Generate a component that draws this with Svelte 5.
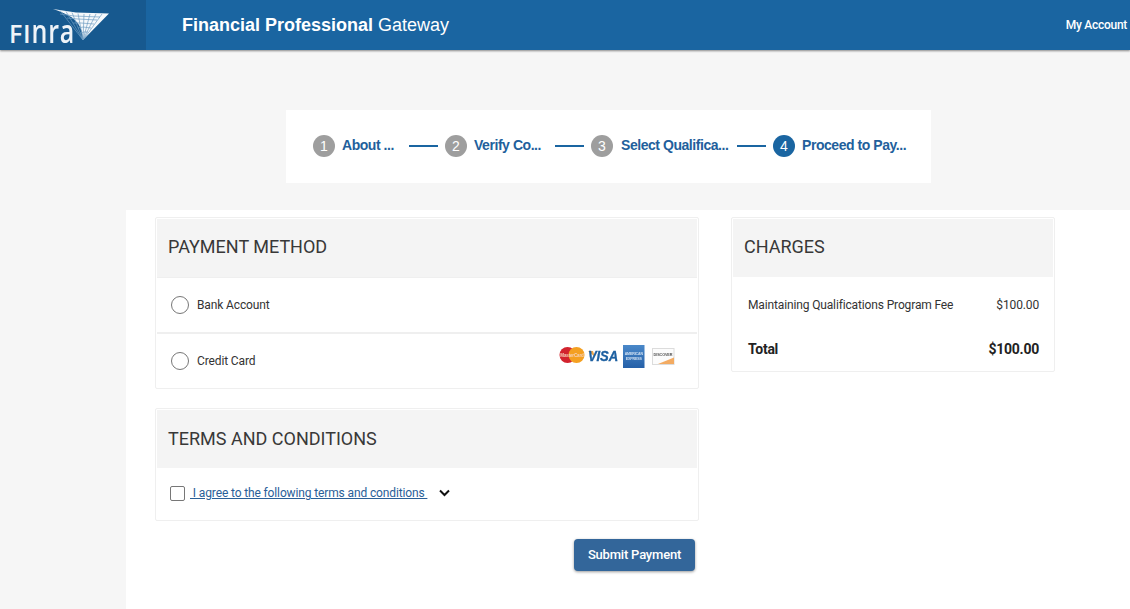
<script>
  const steps = [
    { n: 1, label: 'About ...', w: 60, pad: 7 },
    { n: 2, label: 'Verify Co...', w: 74, pad: 7 },
    { n: 3, label: 'Select Qualifica...', w: 109, pad: 8 },
    { n: 4, label: 'Proceed to Pay...', w: 110, pad: 7, active: true }
  ];
  const fan = [
    [60, 10.5], [66, 11.5], [72, 12.5], [78, 13.5], [84, 14], [90, 14], [96, 14], [102, 14]
  ];
  const arcs = [
    'M60 14 L74 16 L100 17',
    'M67 18 L78 19 L97 20',
    'M73 23 L81 23 L94 24',
    'M78 28 L83 27 L91 28',
    'M80 33 L84 32 L88 32'
  ];
</script>

<header class="topbar">
  <div class="logo">
    <span class="wordmark">FI<span class="low">nra</span></span>
    <svg class="mark" width="146" height="50" viewBox="0 0 146 50">
      <path d="M53 9 L76 12.500 L109 13.500 L83 40 C82.500 30 80 24 72 17.500 C66 14 60 11 53 9 Z" fill="#f5f8fb" />
      {#each fan as [x, y]}
        <path class="net" d="M83 40 L{x} {y}" />
      {/each}
      {#each arcs as d}
        <path class="net" {d} />
      {/each}
    </svg>
  </div>
  <div class="brand"><b>Financial Professional</b> Gateway</div>
  <div class="account">My Account</div>
</header>

<section class="stepper-wrap">
  <div class="stepper">
    {#each steps as s}
      <div class="step" class:active={s.active}>
        <span class="num">{s.n}</span>
        <span class="label" style="width:{s.w}px; margin-left:{s.pad}px">{s.label}</span>
      </div>
      {#if !s.active}<span class="line"></span>{/if}
    {/each}
  </div>
</section>

<main class="content">
  <div class="left">
    <section class="card">
      <h2>PAYMENT METHOD</h2>
      <div class="option first">
        <span class="radio"></span><span>Bank Account</span>
      </div>
      <div class="option">
        <span class="radio"></span><span>Credit Card</span>
        <svg class="cards" width="125" height="30" viewBox="0 0 125 30">
          <defs>
            <linearGradient id="amexfill" x1="0" y1="0" x2="0" y2="1">
              <stop offset="0" stop-color="#4a88c9" />
              <stop offset="1" stop-color="#2560a8" />
            </linearGradient>
          </defs>
          <circle cx="12.500" cy="13" r="8" fill="#d2232e" />
          <circle cx="21.500" cy="13" r="8" fill="#f4a021" />
          <text x="17" y="14.500" class="mc">MasterCard</text>
          <path d="M33 9 L38 9 L40 15 Z" fill="#f0a64a" />
          <text x="33" y="19" class="visa" textLength="30" lengthAdjust="spacingAndGlyphs">VISA</text>
          <rect x="68" y="3" width="21.500" height="23" fill="url(#amexfill)" />
          <text x="78.800" y="13" class="amex">AMERICAN</text>
          <text x="78.800" y="17.500" class="amex">EXPRESS</text>
          <rect x="97.500" y="6.500" width="21.500" height="16" fill="#fcfcfc" stroke="#dcdcdc" />
          <path d="M103 22 L119 15.500 V22 Z" fill="#f3ab62" />
          <text x="108" y="14" class="disc">DISCOVER</text>
        </svg>
      </div>
    </section>

    <section class="card terms">
      <h2>TERMS AND CONDITIONS</h2>
      <div class="agree">
        <span class="check"></span>
        <a href="#terms">&nbsp;I agree to the following terms and conditions&nbsp;</a>
        <svg class="chev" width="12" height="8" viewBox="0 0 12 8">
          <path d="M1 1.500 L5.500 6 L10 1.500" fill="none" stroke="#111" stroke-width="2" />
        </svg>
      </div>
    </section>

    <div class="actions"><button type="button">Submit Payment</button></div>
  </div>

  <aside class="right">
    <section class="card">
      <h2>CHARGES</h2>
      <div class="row"><span>Maintaining Qualifications Program Fee</span><span>$100.00</span></div>
      <div class="row total"><span>Total</span><span>$100.00</span></div>
    </section>
  </aside>
</main>

<style>
  :global(body) {
    margin: 0;
    background: #f6f6f6;
    font-family: Roboto, "Liberation Sans", sans-serif;
    color: #222;
  }
  .topbar {
    height: 50px;
    background: #1a65a1;
    display: flex;
    align-items: center;
    color: #fff;
    box-shadow: 0 1px 2px rgba(0, 0, 0, 0.45);
    position: relative;
  }
  .logo {
    width: 146px;
    height: 50px;
    background: #17598f;
    position: relative;
    flex: none;
  }
  .wordmark {
    position: absolute;
    left: 9px;
    top: 21px;
    font: 600 25px/24px "Open Sans", sans-serif;
    letter-spacing: 0.8px;
    color: #eef3f8;
    white-space: nowrap;
  }
  .low {
    display: inline-block;
    transform: scaleY(1.28);
    transform-origin: 0 21.500px;
  }
  .mark {
    position: absolute;
    left: 0;
    top: 0;
    filter: blur(0.3px);
  }
  .net {
    fill: none;
    stroke: #6f9cc2;
    stroke-width: 0.7;
  }
  .brand {
    margin-left: 36px;
    font: 400 18px/24px "Liberation Sans", sans-serif;
  }
  .brand b { font-weight: 700; }
  .account {
    margin-left: auto;
    margin-right: 3px;
    font: 500 12px/16px Roboto, sans-serif;
    letter-spacing: -0.28px;
  }
  .stepper-wrap {
    padding: 60px 199px 27px 286px;
  }
  .stepper {
    height: 73px;
    background: #fff;
    display: flex;
    align-items: center;
    padding: 0 0 2px 27px;
    box-sizing: border-box;
  }
  .step { display: flex; align-items: center; }
  .num {
    width: 22px;
    height: 22px;
    border-radius: 50%;
    background: #9e9e9e;
    color: #fff;
    font: 400 14px/22px "Liberation Sans", sans-serif;
    text-align: center;
    flex: none;
  }
  .active .num { background: #1a65a1; }
  .label {
    font: 700 14px/18px "Liberation Sans", sans-serif;
    letter-spacing: -0.45px;
    color: #225f9c;
    white-space: nowrap;
    padding-bottom: 2px;
  }
  .line {
    width: 29px;
    height: 2px;
    margin: 0 7px;
    background: #1a65a1;
    flex: none;
  }
  .content {
    margin-left: 126px;
    background: #fff;
    padding: 7px 75px 37px 29px;
    display: flex;
    gap: 32px;
    align-items: flex-start;
    min-height: 399px;
    box-sizing: border-box;
  }
  .left { width: 544px; flex: none; }
  .right { width: 324px; flex: none; }
  .card {
    border: 1px solid #efefef;
    border-radius: 2px;
    padding: 1px 1px 0;
    background: #fff;
  }
  .terms { margin-top: 19px; }
  h2 {
    margin: 0;
    height: 58px;
    padding-left: 11px;
    background: #f4f4f4;
    font: 400 18px/56px Roboto, sans-serif;
    color: #383838;
  }
  .terms h2 { line-height: 57px; }
  .option {
    height: 54px;
    display: flex;
    align-items: center;
    font-size: 12px;
    letter-spacing: -0.13px;
    color: #333;
    border-top: 2px solid #efefef;
    padding-left: 14px;
    position: relative;
  }
  .option.first { border-top: 1px solid #efefef; }
  .radio {
    width: 16px;
    height: 16px;
    border: 1px solid #777;
    border-radius: 50%;
    margin-right: 8px;
    flex: none;
  }
  .cards {
    position: absolute;
    left: 398px;
    top: 8px;
    filter: blur(0.35px);
  }
  .mc {
    font: 700 4.500px "Liberation Sans", sans-serif;
    fill: #f7d3bb;
    text-anchor: middle;
  }
  .visa {
    font: italic 700 15.5px "Liberation Sans", sans-serif;
    fill: #1c5fa0;
    stroke: #1c5fa0;
    stroke-width: 0.35;
  }
  .amex {
    font: 700 3.600px "Liberation Sans", sans-serif;
    fill: #cfe0f2;
    text-anchor: middle;
  }
  .disc {
    font: 700 3.800px "Liberation Sans", sans-serif;
    fill: #555;
    text-anchor: middle;
  }
  .agree {
    height: 50px;
    padding-bottom: 2px;
    display: flex;
    align-items: center;
    padding-left: 13px;
    font-size: 12px;
    letter-spacing: -0.13px;
  }
  .check {
    width: 13px;
    height: 13px;
    border: 1px solid #777;
    border-radius: 2px;
    margin-right: 5px;
    flex: none;
  }
  .agree a { color: #2a6098; }
  .chev { margin-left: 12px; }
  .actions {
    display: flex;
    justify-content: flex-end;
    padding: 18px 4px 0 0;
  }
  button {
    width: 121px;
    height: 32px;
    padding: 0 0 2px;
    border: none;
    border-radius: 4px;
    background: #33669a;
    color: #fff;
    font: 500 13px Roboto, sans-serif;
    letter-spacing: -0.2px;
    box-shadow: 0 1px 3px rgba(0, 0, 0, 0.4);
  }
  .row {
    display: flex;
    justify-content: space-between;
    padding: 0 14px 0 15px;
    font-size: 12px;
    letter-spacing: -0.14px;
    color: #333;
    height: 44px;
    align-items: center;
  }
  h2 + .row { margin-top: 6px; }
  .total {
    font-size: 14px;
    letter-spacing: -0.25px;
    font-weight: 700;
    color: #222;
  }
</style>
